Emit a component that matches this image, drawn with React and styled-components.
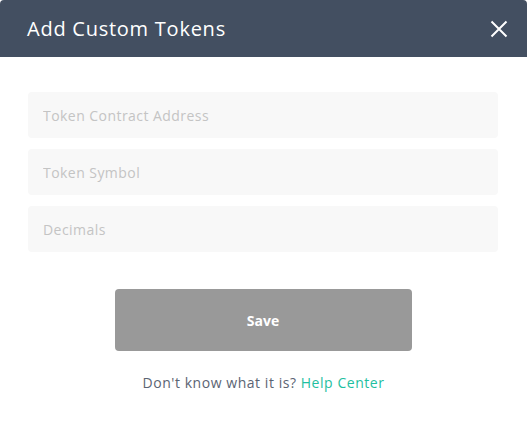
import React from 'react';
import styled, { createGlobalStyle } from 'styled-components';

const GlobalStyle = createGlobalStyle`
  html, body {
    margin: 0;
    padding: 0;
    background: #ffffff;
  }
  * { box-sizing: border-box; }
`

const Modal = styled.div`
  width: 527px;
  height: 424px;
  background: #fff;
  border-radius: 4px;
  overflow: hidden;
  font-family: "Open Sans", "Liberation Sans", sans-serif;
  display: flex;
  flex-direction: column;
`

const Header = styled.div`
  height: 57px;
  background: #434f61;
  display: flex;
  align-items: center;
  justify-content: space-between;
  padding: 0 18px 0 27px;
`

const Title = styled.h2`
  margin: 0;
  font-size: 20px;
  font-weight: 400;
  color: #fff;
  letter-spacing: 0.75px;
`

const CloseButton = styled.button`
  border: 0;
  background: none;
  padding: 0;
  width: 20px;
  height: 20px;
  display: flex;
  align-items: center;
  justify-content: center;
  cursor: pointer;
`

const Body = styled.div`
  padding: 35px 29px 0 28px;
  display: flex;
  flex-direction: column;
  gap: 11px;
`

const Input = styled.input`
  height: 46px;
  border: 0;
  border-radius: 4px;
  background: #f8f8f8;
  padding: 0 15px;
  font-family: inherit;
  font-size: 14px;
  letter-spacing: 0.45px;
  color: #333;
  outline: none;
  &::placeholder {
    color: #c4c4c4;
  }
`

const Footer = styled.div`
  display: flex;
  flex-direction: column;
  align-items: center;
  padding-top: 37px;
`

const SaveButton = styled.button`
  width: 297px;
  height: 62px;
  margin-left: -1px;
  border: 0;
  border-radius: 4px;
  background: #999999;
  color: #fff;
  font-family: inherit;
  font-size: 14px;
  font-weight: 700;
  cursor: pointer;
`

const Hint = styled.p`
  margin: 22px 0 0;
  font-size: 14px;
  letter-spacing: 0.55px;
  color: #5b6473;
`

const Link = styled.a`
  color: #1ec0a0;
  text-decoration: none;
`

export default function App() {
  return (
    <>
      <GlobalStyle />
      <Modal>
        <Header>
          <Title>Add Custom Tokens</Title>
          <CloseButton aria-label="close">
            <svg width="18" height="18" viewBox="0 0 18 18">
              <path d="M1.5 1.5 L16.5 16.5 M16.5 1.5 L1.5 16.5" stroke="#fff" strokeWidth="2" />
            </svg>
          </CloseButton>
        </Header>
        <Body>
          <Input placeholder="Token Contract Address" />
          <Input placeholder="Token Symbol" />
          <Input placeholder="Decimals" />
        </Body>
        <Footer>
          <SaveButton>Save</SaveButton>
          <Hint>
            Don't know what it is? <Link href="#">Help Center</Link>
          </Hint>
        </Footer>
      </Modal>
    </>
  );
}
